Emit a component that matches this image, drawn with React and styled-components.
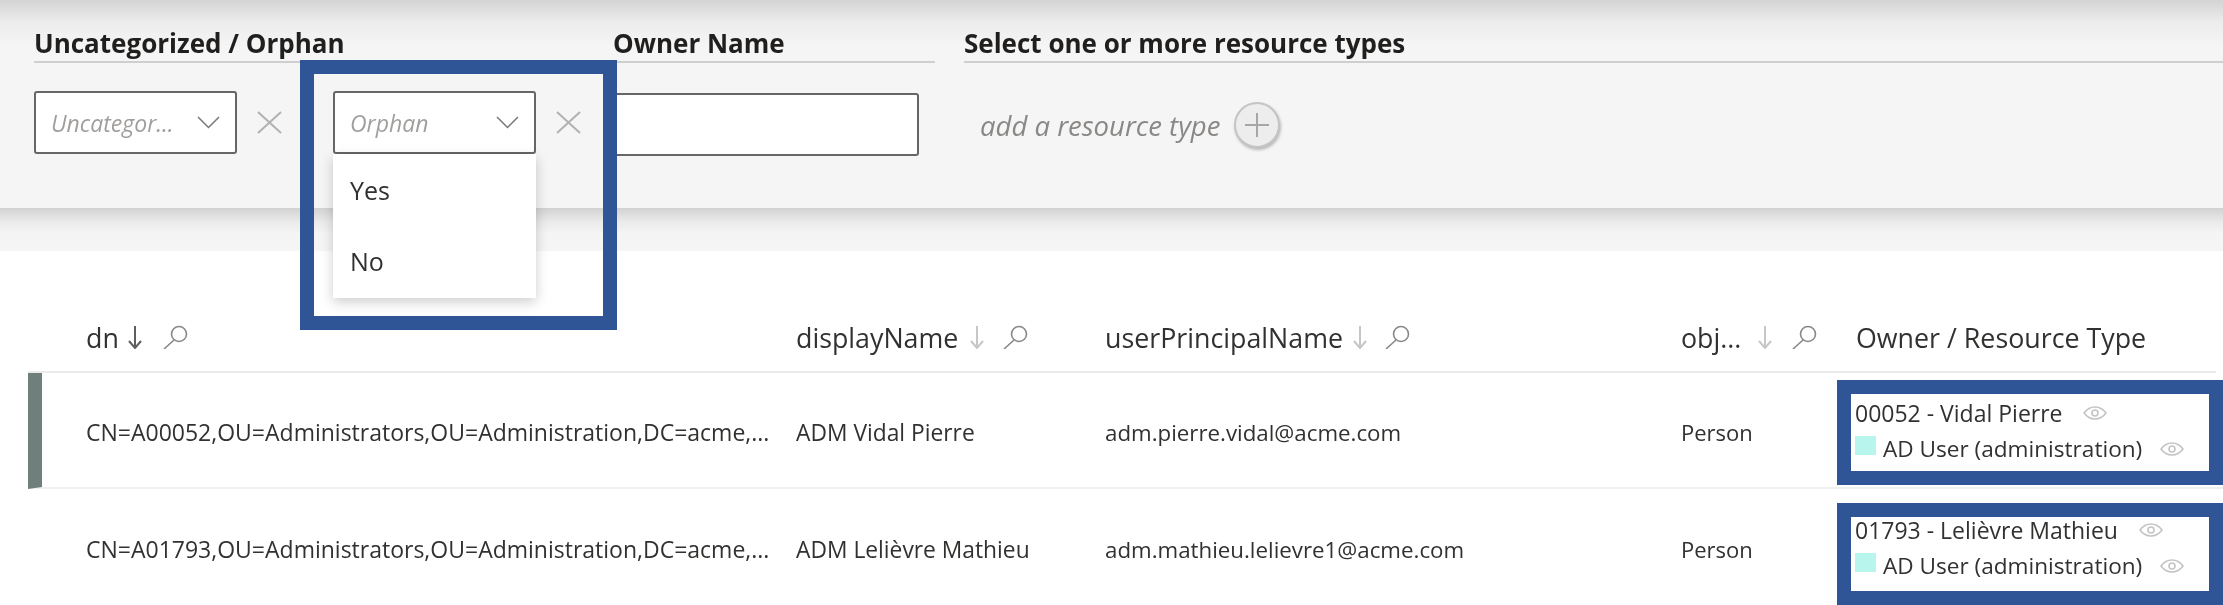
import React from "react"
import styled, { createGlobalStyle } from "styled-components";

const GlobalStyle = createGlobalStyle`
    html, body {
        margin: 0;
        padding: 0;
        background: #fff;
    }
    body {
        font-family: "Open Sans", "Noto Sans", sans-serif;
        color: #323130;
    }
`;

const Page = styled.div`
    position: relative;
    width: 2223px;
    height: 605px;
    overflow: hidden;
    background: #fff;
    filter: blur(.5px);
`;

const FilterPanel = styled.div`
    display: grid;
    grid-template-columns: 550px 322px 1fr;
    column-gap: 29px;
    box-sizing: border-box;
    height: 208px;
    padding: 27px 0 0 34px;
    background: linear-gradient(#d4d4d4, #ececec 22px, #f5f5f5 46px);
`;

const ShadowBand = styled.div`
    height: 44px;
    background: linear-gradient(#d2d2d2, #ebebeb 14px, #f5f5f5 26px, #f5f5f5 42px, #fff);
`;

const FilterTitle = styled.div`
    height: 33px;
    padding-bottom: 1px;
    border-bottom: 2px solid #cfcfcf;
    font-size: 26px;
    line-height: 33px;
    font-weight: 700;
    color: #201f1e;
    white-space: nowrap;
`;

const FilterRow = styled.div`
    display: flex;
    align-items: center;
    margin-top: ${(p) => p.$top}px;
`;

const Select = styled.div`
    position: relative;
    display: flex;
    align-items: center;
    justify-content: space-between;
    box-sizing: border-box;
    width: 203px;
    height: 63px;
    margin-left: ${(p) => p.$left || 0}px;
    padding: 0 15px 0 15px;
    border: 2px solid #666;
    border-radius: 3px;
    background: #fff;
`;

const Placeholder = styled.span`
    font-size: 23px;
    font-style: italic;
    color: #a19f9d;
    white-space: nowrap;
`;

const ClearIcon = styled.svg`
    width: 25px;
    height: 23px;
    margin-left: ${(p) => p.$left}px;
    flex: none;
`;

const Menu = styled.div`
    position: absolute;
    top: 100%;
    left: -2px;
    right: -2px;
    margin-top: 2px;
    padding: 1px 0;
    background: #fff;
    box-shadow: 0 4px 12px rgba(0, 0, 0, .2);
    z-index: 2;
`;

const MenuItem = styled.div`
    height: 71px;
    line-height: 71px;
    padding-left: 17px;
    font-size: 25px;
    color: #323130;
`;

const TextInput = styled.div`
    box-sizing: border-box;
    width: 306px;
    height: 63px;
    border: 2px solid #666;
    border-radius: 3px;
    background: #fff;
`;

const AddResource = styled.div`
    display: flex;
    align-items: center;
    gap: 14px;
    padding-left: 16px;
    font-size: 27.5px;
    font-style: italic;
    color: #8a8886;
`;

const AddButton = styled.div`
    display: flex;
    align-items: center;
    justify-content: center;
    box-sizing: border-box;
    width: 46px;
    height: 46px;
    border: 2px solid #c4c4c4;
    border-radius: 50%;
    background: #ededed;
    box-shadow: 1px 2px 3px rgba(0, 0, 0, .25);
`;

const HighlightFrame = styled.div`
    position: absolute;
    top: 60px;
    left: 300px;
    box-sizing: border-box;
    width: 317px;
    height: 270px;
    border: 14px solid #2f5597;
    pointer-events: none;
    z-index: 3;
`;

const columns = "710px 309px 576px 156px 386px";

const HeaderRow = styled.div`
    display: grid;
    grid-template-columns: ${columns};
    align-items: center;
    box-sizing: border-box;
    height: 121px;
    margin: 0 7px 0 28px;
    padding: 51px 0 0 58px;
    border-bottom: 2px solid #edebe9;
`;

const HeaderCell = styled.div`
    display: flex;
    align-items: center;
    padding-left: ${(p) => p.$inset || 0}px;
    font-size: 26.8px;
    color: #323130;
    white-space: nowrap;
`;

const SortIcon = styled.svg`
    width: 14px;
    height: 23px;
    margin-left: ${(p) => p.$left}px;
    flex: none;
`;

const SearchIcon = styled.svg`
    width: 25px;
    height: 24px;
    margin-left: ${(p) => p.$left}px;
    flex: none;
`;

const Row = styled.div`
    display: grid;
    grid-template-columns: ${columns};
    align-items: center;
    box-sizing: border-box;
    height: ${(p) => (p.$selected ? 116 : 117)}px;
    margin-left: 28px;
    padding: 4px 0 0 44px;
    border-left: 14px solid ${(p) => (p.$selected ? "#6f7f7c" : "transparent")};
    border-bottom: 2px solid ${(p) => (p.$selected ? "#f1f0ef" : "transparent")};
    color: #323130;
`;

const Cell = styled.div`
    font-size: ${(p) => p.$size}px;
    white-space: nowrap;
`;

const OwnerFrame = styled.div`
    align-self: start;
    box-sizing: border-box;
    margin-top: ${(p) => p.$top}px;
    padding: ${(p) => p.$padding};
    border: 14px solid #2f5597;
    background: #fff;
`;

const OwnerLine = styled.div`
    display: flex;
    align-items: center;
    height: 26px;
    line-height: 26px;
    font-size: ${(p) => p.$size}px;
    white-space: nowrap;
    & + & {
        margin-top: 10px;
    }
`;

const Swatch = styled.span`
    width: 21px;
    height: 19px;
    margin: -7px 7px 0 0;
    background: #b8f5ec;
    flex: none;
`;

const EyeIcon = styled.svg`
    width: 24px;
    height: 14px;
    margin-left: ${(p) => p.$left}px;
    flex: none;
`;

const Chevron = () => (
    <svg width="23" height="13" viewBox="0 0 23 13" fill="none" stroke="#777" strokeWidth="1.5">
        <path d="M1 1l10.5 10.5L22 1" />
    </svg>
)

const Clear = ({ left }) => (
    <ClearIcon $left={left} viewBox="0 0 25 23" fill="none" stroke="#b3b1af" strokeWidth="2">
        <path d="M1 1l23 21M24 1L1 22" />
    </ClearIcon>
)

const Sort = ({ left, active }) => (
    <SortIcon $left={left} viewBox="0 0 14 23" fill="none" stroke={active ? "#605e5c" : "#c8c6c4"} strokeWidth="2">
        <path d="M7 0v22M1 15l6 7 6-7" />
    </SortIcon>
)

const Search = ({ left }) => (
    <SearchIcon $left={left} viewBox="0 0 25 24" fill="none" stroke="#8a8886" strokeWidth="1.6">
        <circle cx="16" cy="9" r="7.5" />
        <path d="M11 15L1 24" />
    </SearchIcon>
)

const Eye = ({ left }) => (
    <EyeIcon $left={left} viewBox="0 0 24 14" fill="none" stroke="#c4c4c4" strokeWidth="1.6">
        <path d="M1 7c3-4 7-6 11-6s8 2 11 6c-3 4-7 6-11 6S4 11 1 7z" />
        <circle cx="12" cy="7" r="3" />
    </EyeIcon>
)

const rows = [
    {
        dn: "CN=A00052,OU=Administrators,OU=Administration,DC=acme,...",
        displayName: "ADM Vidal Pierre",
        upn: "adm.pierre.vidal@acme.com",
        owner: "00052 - Vidal Pierre",
        eyeLeft: 20,
        top: 3,
        padding: "6px 0 9px 4px",
        selected: true
    },
    {
        dn: "CN=A01793,OU=Administrators,OU=Administration,DC=acme,...",
        displayName: "ADM Lelièvre Mathieu",
        upn: "adm.mathieu.lelievre1@acme.com",
        owner: "01793 - Lelièvre Mathieu",
        eyeLeft: 21,
        top: 10,
        padding: "0 0 12px 4px",
        selected: false
    }
]

export default function App() {
    return (
        <Page>
            <GlobalStyle />
            <FilterPanel>
                <div>
                    <FilterTitle>Uncategorized / Orphan</FilterTitle>
                    <FilterRow $top={28}>
                        <Select>
                            <Placeholder>Uncategor...</Placeholder>
                            <Chevron />
                        </Select>
                        <Clear left={20} />
                        <Select $left={51}>
                            <Placeholder>Orphan</Placeholder>
                            <Chevron />
                            <Menu>
                                <MenuItem>Yes</MenuItem>
                                <MenuItem>No</MenuItem>
                            </Menu>
                        </Select>
                        <Clear left={20} />
                    </FilterRow>
                </div>
                <div>
                    <FilterTitle>Owner Name</FilterTitle>
                    <FilterRow $top={30}>
                        <TextInput />
                    </FilterRow>
                </div>
                <div>
                    <FilterTitle>Select one or more resource types</FilterTitle>
                    <FilterRow $top={39}>
                        <AddResource>
                            add a resource type
                            <AddButton>
                                <svg width="26" height="26" viewBox="0 0 26 26" fill="none" stroke="#a6a6a6" strokeWidth="2">
                                    <path d="M13 1v24M1 13h24" />
                                </svg>
                            </AddButton>
                        </AddResource>
                    </FilterRow>
                </div>
            </FilterPanel>
            <ShadowBand />
            <HeaderRow>
                <HeaderCell>dn<Sort left={9} active /><Search left={21} /></HeaderCell>
                <HeaderCell>displayName<Sort left={12} /><Search left={19} /></HeaderCell>
                <HeaderCell>userPrincipalName<Sort left={10} /><Search left={18} /></HeaderCell>
                <HeaderCell>obj...<Sort left={17} /><Search left={20} /></HeaderCell>
                <HeaderCell $inset={19}>Owner / Resource Type</HeaderCell>
            </HeaderRow>
            {rows.map((row) => (
                <Row key={row.dn} $selected={row.selected}>
                    <Cell $size={23}>{row.dn}</Cell>
                    <Cell $size={22.8}>{row.displayName}</Cell>
                    <Cell $size={22.3}>{row.upn}</Cell>
                    <Cell $size={22}>Person</Cell>
                    <OwnerFrame $top={row.top} $padding={row.padding}>
                        <OwnerLine $size={23}>{row.owner}<Eye left={row.eyeLeft} /></OwnerLine>
                        <OwnerLine $size={22.6}><Swatch />AD User (administration)<Eye left={18} /></OwnerLine>
                    </OwnerFrame>
                </Row>
            ))}
            <HighlightFrame />
        </Page>
    )
}
